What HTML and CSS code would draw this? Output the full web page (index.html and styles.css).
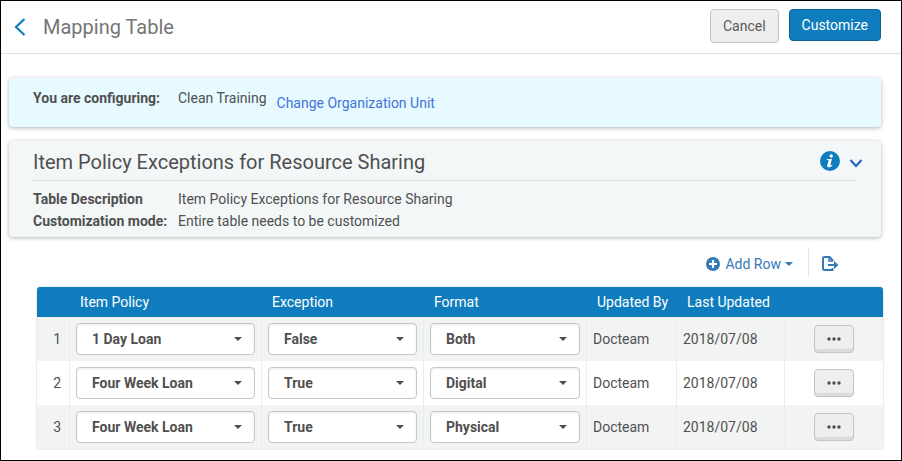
FILE: index.html
```html
<!DOCTYPE html>
<html lang="en">
<head>
<meta charset="utf-8">
<title>Mapping Table</title>
<link rel="stylesheet" href="styles.css">
</head>
<body>
<header class="page-header">
  <button class="icon-button back" type="button" aria-label="Back">
    <svg width="12" height="18" viewBox="0 0 12 18"><path d="M10.500 1 2 9l8.500 8" fill="none" stroke="currentColor" stroke-width="2.200"/></svg>
  </button>
  <h1>Mapping Table</h1>
  <button class="button cancel" type="button">Cancel</button>
  <button class="button primary" type="button">Customize</button>
</header>
<main>
  <section class="card context">
    <b class="label">You are configuring:</b>
    <span>Clean Training</span>
    <a class="change-unit" href="#">Change Organization Unit</a>
  </section>
  <section class="card details">
    <div class="details-head">
      <h2>Item Policy Exceptions for Resource Sharing</h2>
      <button class="icon-button info" type="button" aria-label="Information">
        <svg width="20" height="20" viewBox="0 0 20 20"><circle cx="10" cy="10" r="10" fill="currentColor"/><circle cx="11.200" cy="5" r="1.700" fill="#fff"/><path d="M7 8h5l-1.700 6c-.1.500.4.600 1.600-.5l.6.500c-1.400 1.900-2.900 2.500-4.200 2.200-1-.2-1.300-1-1-2l1.300-4.600c.1-.4-.3-.6-1.800-.6z" fill="#fff"/></svg>
      </button>
      <button class="icon-button toggle" type="button" aria-label="Collapse">
        <svg width="14" height="9" viewBox="0 0 14 9"><path d="m1.500 1 5.500 6 5.500-6" fill="none" stroke="currentColor" stroke-width="2"/></svg>
      </button>
    </div>
    <dl>
      <dt class="label">Table Description</dt><dd>Item Policy Exceptions for Resource Sharing</dd>
      <dt class="label">Customization mode:</dt><dd>Entire table needs to be customized</dd>
    </dl>
  </section>
  <div class="toolbar">
    <button class="icon-button add-row" type="button">
      <svg width="14" height="14" viewBox="0 0 14 14"><circle cx="7" cy="7" r="7" fill="currentColor"/><path d="M7 3v8M3 7h8" stroke="#fff" stroke-width="2.200"/></svg>
      <span>Add Row</span>
      <svg width="8" height="4" viewBox="0 0 8 4"><path d="M0 0h8L4 4z" fill="currentColor"/></svg>
    </button>
    <button class="icon-button export" type="button" aria-label="Export">
      <svg width="17" height="15" viewBox="0 0 17 15"><path d="M10.500 5V4.200L7.500 1H2.500Q1 1 1 2.500v10Q1 14 2.500 14h8v-2" fill="none" stroke="currentColor" stroke-width="2"/><path d="M7 1v4h4" fill="none" stroke="currentColor" stroke-width="1.500"/><path d="M6 9h8" stroke="currentColor" stroke-width="2"/><path d="m12 5 4.500 4-4.500 4z" fill="currentColor"/></svg>
    </button>
  </div>
  <table>
    <colgroup><col class="c-num"><col class="c-policy"><col class="c-exception"><col class="c-format"><col class="c-by"><col class="c-date"><col></colgroup>
    <thead>
      <tr><th></th><th>Item Policy</th><th>Exception</th><th>Format</th><th>Updated By</th><th>Last Updated</th><th></th></tr>
    </thead>
    <tbody>
      <tr>
        <td class="num">1</td>
        <td><div class="select"><select aria-label="Item Policy 1"><option>1 Day Loan</option></select></div></td>
        <td><div class="select"><select aria-label="Exception 1"><option>False</option></select></div></td>
        <td><div class="select"><select aria-label="Format 1"><option>Both</option></select></div></td>
        <td>Docteam</td><td>2018/07/08</td>
        <td class="actions"><button class="more" type="button" aria-label="Row 1 actions"><svg width="14" height="4" viewBox="0 0 14 4"><circle cx="2" cy="2" r="1.700"/><circle cx="7" cy="2" r="1.700"/><circle cx="12" cy="2" r="1.700"/></svg></button></td>
      </tr>
      <tr>
        <td class="num">2</td>
        <td><div class="select"><select aria-label="Item Policy 2"><option>Four Week Loan</option></select></div></td>
        <td><div class="select"><select aria-label="Exception 2"><option>True</option></select></div></td>
        <td><div class="select"><select aria-label="Format 2"><option>Digital</option></select></div></td>
        <td>Docteam</td><td>2018/07/08</td>
        <td class="actions"><button class="more" type="button" aria-label="Row 2 actions"><svg width="14" height="4" viewBox="0 0 14 4"><circle cx="2" cy="2" r="1.700"/><circle cx="7" cy="2" r="1.700"/><circle cx="12" cy="2" r="1.700"/></svg></button></td>
      </tr>
      <tr>
        <td class="num">3</td>
        <td><div class="select"><select aria-label="Item Policy 3"><option>Four Week Loan</option></select></div></td>
        <td><div class="select"><select aria-label="Exception 3"><option>True</option></select></div></td>
        <td><div class="select"><select aria-label="Format 3"><option>Physical</option></select></div></td>
        <td>Docteam</td><td>2018/07/08</td>
        <td class="actions"><button class="more" type="button" aria-label="Row 3 actions"><svg width="14" height="4" viewBox="0 0 14 4"><circle cx="2" cy="2" r="1.700"/><circle cx="7" cy="2" r="1.700"/><circle cx="12" cy="2" r="1.700"/></svg></button></td>
      </tr>
    </tbody>
  </table>
</main>
</body>
</html>
```
FILE: styles.css
```css
* { box-sizing: border-box; }

body {
  margin: 0;
  min-height: 100vh;
  border: 1px solid #000;
  background: #fff;
  color: #505050;
  font: 14px/22px Roboto, sans-serif;
}

button, select { font: inherit; color: inherit; }
svg { display: block; }
h1, h2, dl, dd { margin: 0; }
h1, h2 { font-size: 20px; font-weight: 400; }

.icon-button {
  display: flex;
  align-items: center;
  padding: 0;
  border: 0;
  background: none;
  color: #0f7dbd;
}

.page-header {
  display: flex;
  align-items: flex-start;
  padding: 8px 20px 8px 13px;
  border-bottom: 1px solid #e0e0e0;
}

.back { height: 36px; }

h1 {
  flex: 1;
  padding-left: 17px;
  line-height: 36px;
  color: #757575;
}

.button {
  padding: 0 12px;
  border: 1px solid #c4c4c4;
  border-radius: 4px;
  line-height: 32px;
}

.cancel { background: #eee; color: #5a5a5a; }

.primary {
  margin-left: 10px;
  border-color: #0c6495;
  background: #0f7dbd;
  color: #fff;
  line-height: 30px;
}

main { padding: 24px 17px 10px 8px; }

.card {
  margin-right: 3px;
  border-radius: 4px;
  box-shadow: 0 1px 4px rgba(0, 0, 0, .3);
}

.context {
  display: flex;
  padding: 9px 24px 8px;
  background: #e6faff;
}

.label {
  width: 145px;
  font-weight: 700;
}

.change-unit {
  margin: 5px 0 5px 10px;
  color: #4472db;
  text-decoration: none;
}

.details {
  margin-top: 14px;
  padding: 4px 18px 5px 24px;
  background: #f3f7f8;
}

.details-head {
  display: flex;
  align-items: center;
  height: 35px;
  padding-bottom: 3px;
}

h2 { flex: 1; padding-top: 2px; line-height: 32px; }
.info { margin-right: 9px; }
.toggle { padding-top: 4px; color: #1f5fbf; }

dl {
  display: grid;
  grid-template-columns: 145px 1fr;
  margin-right: 7px;
  padding-top: 7px;
  border-top: 1px solid #e0e0e0;
}

.toolbar {
  display: flex;
  justify-content: flex-end;
  height: 30px;
  margin: 10px 45px 9px 0;
}

.toolbar .icon-button { color: #337ab7; }
.add-row { gap: 5px; padding-right: 15px; padding-top: 4px; }
.add-row span + svg { margin-left: -1px; }
.export { padding: 3px 0 0 13px; border-left: 1px solid #e7e7e7; }

table {
  width: calc(100% - 27px);
  margin-left: 27px;
  border-collapse: separate;
  border-spacing: 0;
  table-layout: fixed;
  border: 1px solid #ebeded;
  border-radius: 3px;
}

.c-num { width: 33px; }
.c-policy { width: 192px; }
.c-exception { width: 162px; }
.c-format { width: 163px; }
.c-by { width: 90px; }
.c-date { width: 108px; }

th {
  height: 30px;
  padding: 0 0 0 10px;
  background: #0f7dbd;
  color: #fff;
  font-weight: 400;
  text-align: left;
}

th:first-child { border-top-left-radius: 3px; }
th:last-child { border-top-right-radius: 3px; }

td {
  height: 44px;
  padding: 0 6px;
  border-right: 1px solid #ebeded;
}

td:last-child { border-right: 0; }
tbody tr:nth-child(odd) { background: #f2f4f4; }
.num { padding-right: 8px; text-align: right; }

.select { position: relative; }

.select::after {
  content: "";
  position: absolute;
  top: 14px;
  right: 13px;
  border: 4px solid transparent;
  border-top-color: #4d4d4d;
  border-bottom: 0;
  pointer-events: none;
}

select {
  display: block;
  appearance: none;
  width: 100%;
  height: 32px;
  padding: 0 28px 0 15px;
  border: 1px solid #c1c8d0;
  border-radius: 4px;
  background: #fff;
  box-shadow: inset 0 1px 2px rgba(0, 0, 0, .08);
  font-weight: 700;
}

.more {
  display: flex;
  align-items: center;
  justify-content: center;
  width: 40px;
  height: 28px;
  margin: 0 auto;
  padding: 0;
  border: 1px solid #c4c4c4;
  border-radius: 4px;
  background: #eee;
  box-shadow: inset 0 -3px #dcdcdc;
  fill: #4d4d4d;
}
```
